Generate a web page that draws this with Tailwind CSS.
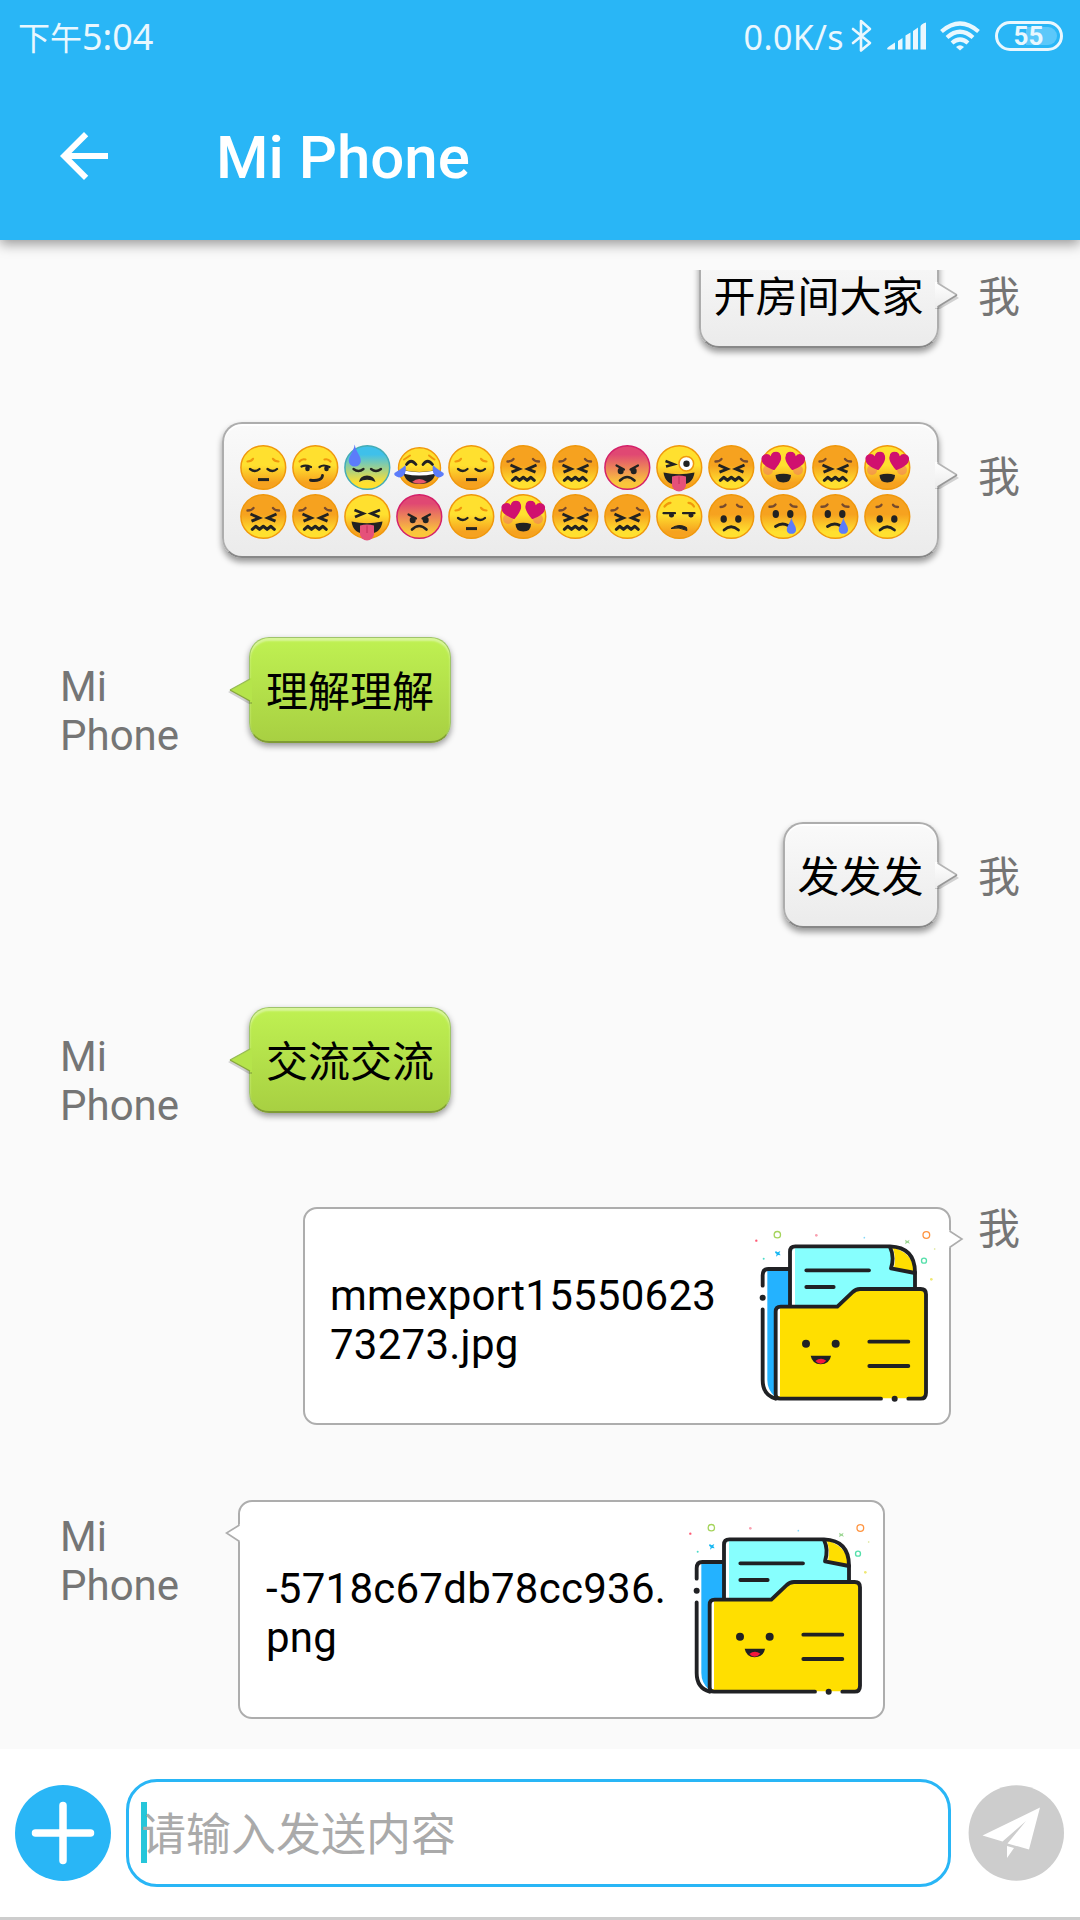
<!DOCTYPE html>
<html lang="zh-CN">
<head>
<meta charset="utf-8">
<title>Mi Phone</title>
<script src="https://cdn.jsdelivr.net/npm/@tailwindcss/browser@4"></script>
</head>
<body class="w-[1080px] h-[1920px] overflow-hidden flex flex-col bg-[#fafafa] font-['Roboto','Noto_Sans_CJK_SC',sans-serif] text-[42px] leading-[49px] text-black">

<svg width="0" height="0" class="absolute" aria-hidden="true">
  <defs>
    <linearGradient id="gy" x1="0" y1="0" x2="0" y2="1"><stop offset=".45" stop-color="#ffe02f"/><stop offset=".85" stop-color="#f6a21f"/></linearGradient>
    <linearGradient id="go" x1="0" y1="0" x2="0" y2="1"><stop offset=".45" stop-color="#f6a21f"/><stop offset=".85" stop-color="#ffe02f"/></linearGradient>
    <linearGradient id="gb" x1="0" y1="0" x2="0" y2="1"><stop offset=".2" stop-color="#3fc0ea"/><stop offset=".85" stop-color="#ffe02f"/></linearGradient>
    <linearGradient id="gr" x1="0" y1="0" x2="0" y2="1"><stop offset=".2" stop-color="#e04873"/><stop offset=".85" stop-color="#fac63b"/></linearGradient>
    <symbol id="yellow" viewBox="0 0 52 49"><ellipse cx="26.300" cy="24.500" rx="22.400" ry="21.800" fill="url(#gy)" stroke="#f0980c" stroke-width="1.500"/></symbol>
    <symbol id="orange" viewBox="0 0 52 49"><ellipse cx="26.300" cy="24.500" rx="22.400" ry="21.800" fill="url(#go)" stroke="#f0980c" stroke-width="1.500"/></symbol>
    <symbol id="heart" viewBox="0 0 20 18"><path d="M10 18C3 13 0 9.500 0 5.500A5.200 5.200 0 0 1 10 3.500A5.200 5.200 0 0 1 20 5.500C20 9.500 17 13 10 18Z" fill="#d0106f"/></symbol>

    <symbol id="pensive" viewBox="0 0 52 49"><use href="#yellow" width="52" height="49"/>
      <g fill="none" stroke-linecap="round"><path d="M10.500 18.500Q14.500 18.500 16 15.800M36 15.800Q37.500 18.500 41.500 18.500" stroke="#f0980c" stroke-width="2.200"/><path d="M13 26q5 4 9.500 0M30.500 26q5 4 9.500 0" stroke="#222" stroke-width="2.300"/><path d="M21 36.600h11" stroke="#222" stroke-width="3" stroke-linecap="butt"/></g></symbol>
    <symbol id="smirk" viewBox="0 0 52 49"><use href="#yellow" width="52" height="49"/>
      <g fill="none" stroke-linecap="round"><path d="M10.500 18.500Q13 15.500 16.500 16.500M35.500 16.500Q39 15.500 41.500 18.500" stroke="#f0980c" stroke-width="2.200"/><path d="M12.500 23.500q4-2 9.500.5M30.500 24q4-3 10 0" stroke="#222" stroke-width="2.200"/><path d="M18.500 25v1M37.500 25v1" stroke="#222" stroke-width="4.500"/><path d="M21.500 37.200Q33 38.500 33.500 32.500" stroke="#222" stroke-width="2.900"/></g></symbol>
    <symbol id="sweat" viewBox="0 0 52 49"><ellipse cx="26.300" cy="24.500" rx="22.400" ry="21.800" fill="url(#gb)" stroke="#45acb5" stroke-width="1.500"/>
      <path d="M12.500 26q5 4 10 0M30 26q5 4 10 0" fill="none" stroke="#222" stroke-width="2.300" stroke-linecap="round"/><path d="M18 39Q19 32.500 26 32.500T34.500 39Q26 34.500 18 39Z" fill="#222"/><path d="M13.700 1.500C15 9 20 13 19.800 18A6 5.500 0 0 1 7.800 18C7.800 13 12.500 9 13.700 1.500Z" fill="#5c7cfa"/></symbol>
    <symbol id="joy" viewBox="0 0 52 49"><ellipse cx="26.500" cy="25" rx="21" ry="20.300" fill="url(#gy)" stroke="#f0980c" stroke-width="1.400"/>
      <g fill="none" stroke-linecap="round"><path d="M11 16.500Q13.500 15 17 12.500M36 12.500Q39 15 41.500 16.500" stroke="#f0980c" stroke-width="2"/><path d="M13.500 21.500q4.500-6.500 9.500 0M30 21.500q4.500-6.500 9.500 0" stroke="#222" stroke-width="2.800"/></g><path d="M10 27Q26 31 43 27Q42 41 26.500 41T10 27Z" fill="#222"/><path d="M11 27.400Q26 31 42 27.400L41 31Q26 34 12 31Z" fill="#fff"/><path d="M19 39Q26 33 34 39Q26 42.500 19 39Z" fill="#e9566a"/><path d="M12.500 22C14 29 11 34.500 6 34.500Q0 32.500 1.500 30C5 27.500 9 26 12.500 22ZM40 22C38.500 29 41.500 34.500 46.500 34.500Q52 32.500 50.500 30C47 27.500 43.500 26 40 22Z" fill="#5c7cfa"/></symbol>
    <symbol id="confounded" viewBox="0 0 52 49"><use href="#orange" width="52" height="49"/>
      <g fill="none" stroke-linecap="round"><path d="M10.500 18.500Q15 18.500 16.500 16M36 16Q37.500 18.500 42 18.500" stroke="#774a2c" stroke-width="2.400"/><path d="M13.500 22L22.300 26L14.500 29.200M39.500 22L30.700 26L38.500 29.200" stroke="#222" stroke-width="2.900" stroke-linecap="butt" stroke-linejoin="miter"/><path d="M15.300 37.300L18.700 34.300L22.500 37.300L26.300 34.300L30.100 37.300L33.900 34.300L37.300 37.300" stroke="#222" stroke-width="3.100" stroke-linejoin="round"/></g></symbol>
    <symbol id="tongue" viewBox="0 0 52 49"><path d="M10.500 29.500Q26 33 41.500 29.500Q40 42 26 42T10.500 29.500Z" fill="#222"/><path d="M19 33.500Q26 31.500 33 33.500V42A7 6.500 0 0 1 19 42Z" fill="#e5517a"/><path d="M26 33.500V41" stroke="#c22f5d" stroke-width="1"/></symbol>
    <symbol id="squint" viewBox="0 0 52 49"><use href="#yellow" width="52" height="49"/><path d="M13.500 18L22.300 21.500L14 25M39 18L30.200 21.500L38.500 25" fill="none" stroke="#222" stroke-width="2.800"/><use href="#tongue" width="52" height="49"/></symbol>
    <symbol id="wink" viewBox="0 0 52 49"><use href="#yellow" width="52" height="49"/><path d="M12.500 18L21 21.300L13 23.500" fill="none" stroke="#222" stroke-width="2.500"/><circle cx="33.300" cy="20.700" r="7.300" fill="#fff" stroke="#f0980c" stroke-width="1.500"/><circle cx="33.500" cy="20.700" r="3.200" fill="#222"/><use href="#tongue" width="52" height="49"/></symbol>
    <symbol id="angry" viewBox="0 0 52 49"><ellipse cx="26.300" cy="24.500" rx="22.400" ry="21.800" fill="url(#gr)" stroke="#d4206a" stroke-width="1.500"/><path d="M15.500 22.500L23 26.500M37 22.500L29.500 26.500" stroke="#222" stroke-width="2.200" stroke-linecap="round"/><ellipse cx="19.700" cy="28" rx="3" ry="3.200" fill="#222"/><ellipse cx="32.700" cy="28" rx="3" ry="3.200" fill="#222"/><path d="M19 37.500Q26 30.500 33.500 37.500" fill="none" stroke="#222" stroke-width="2.600" stroke-linecap="round"/></symbol>
    <symbol id="love" viewBox="0 0 52 49"><use href="#yellow" width="52" height="49"/><circle cx="11" cy="27" r="5" fill="#ee7565" opacity=".5"/><circle cx="41" cy="27" r="5" fill="#ee7565" opacity=".5"/><use href="#heart" x="5" y="9.500" width="20" height="18" transform="rotate(-14 15 18)"/><use href="#heart" x="27.500" y="9.500" width="20" height="18" transform="rotate(14 37.500 18)"/><path d="M18.500 32Q26.300 29.500 34 32Q34 39.500 26.300 39.500T18.500 32Z" fill="#222"/></symbol>
    <symbol id="unamused" viewBox="0 0 52 49"><use href="#yellow" width="52" height="49"/><g fill="none" stroke-linecap="round"><path d="M11.500 14.500Q14 11 17.500 10.800M35.500 10.800Q39 11 41 14.500" stroke="#f0980c" stroke-width="2.200"/><path d="M10.500 21.200h11.500M30 21.200h11.500" stroke="#222" stroke-width="2.200"/><path d="M18 23.300h1M37.500 23.300h1" stroke="#222" stroke-width="4.200"/></g><path d="M18 36.500Q26 31 33.500 35.500L34 38.500Q26 34.500 18 36.500Z" fill="#222" stroke="#222"/></symbol>
    <symbol id="worried" viewBox="0 0 52 49"><use href="#orange" width="52" height="49"/><g fill="none" stroke-linecap="round"><path d="M15.500 15Q19 15 20.500 12.800M32 12.800Q33.500 15 37 15" stroke="#774a2c" stroke-width="2.300"/><path d="M19 38Q26 31.500 33.500 38" stroke="#222" stroke-width="2.700"/></g><ellipse cx="18.700" cy="27" rx="3.200" ry="3.800" fill="#222"/><ellipse cx="33.300" cy="27" rx="3.200" ry="3.800" fill="#222"/></symbol>
    <symbol id="cry" viewBox="0 0 52 49"><use href="#orange" width="52" height="49"/><g fill="none" stroke-linecap="round"><path d="M12.500 14.800Q17 15 18.500 12.500M33.500 12.500Q35 15 39.500 14.800" stroke="#774a2c" stroke-width="2.400"/><path d="M18.500 34.500Q25 30 31 33.500" stroke="#222" stroke-width="2.900"/></g><ellipse cx="18.800" cy="22" rx="3.200" ry="3.900" fill="#222"/><ellipse cx="33.300" cy="22" rx="3.200" ry="3.900" fill="#222"/><path d="M34.300 25.500C35.500 31 39.500 34 39 38.500A4.700 4.200 0 0 1 29.800 38.500C29.500 34 33.500 31 34.300 25.500Z" fill="#5c7cfa"/></symbol>

    <linearGradient id="tipg" x1="0" y1="0" x2="0" y2="1"><stop offset="0" stop-color="#fff"/><stop offset="1" stop-color="#ececec"/></linearGradient>
    <symbol id="tip-gray" viewBox="0 0 30 40"><path d="M0 8L5 8L24 21L5 32L0 32Z" fill="#000" opacity=".16"/><path d="M0 5H2.500V6L22 18L2.500 30V31H0Z" fill="url(#tipg)"/><path d="M2.500 6L22 18" fill="none" stroke="#b4b4b4" stroke-width="1.500"/><path d="M22 18L2.500 30" fill="none" stroke="#979797" stroke-width="1.500"/></symbol>
    <symbol id="tip-green" viewBox="0 0 30 40"><path d="M30 10L26 10L6 20L27 32L30 32Z" fill="#000" opacity=".16"/><path d="M30 6H28V7L8 18L28 29V30H30Z" fill="#b5e44b"/><path d="M28 7L8 18" fill="none" stroke="#97bb55" stroke-width="1.400"/><path d="M8 18L28 29" fill="none" stroke="#87a63d" stroke-width="1.400"/></symbol>

    <symbol id="folder" viewBox="72 114 558 528">
      <path d="M112 240H185V350L135 365V620Q112 600 112 570Z" fill="#24b2ff"/>
      <path d="M195 170H480L552 245V300H380L325 348H185V185Z" fill="#87fffe"/>
      <path d="M185 185V348H195V172Z" fill="#fff"/>
      <path d="M480 170Q495 200 483 235L555 250Q550 185 480 170Z" fill="#ffdf00"/>
      <path d="M480 175Q490 200 483 233L492 235Q498 205 490 178Z" fill="#fff"/>
      <path d="M137 350H325L382 297H588V625H137Z" fill="#ffdf00"/>
      <path d="M140 355H150V618H140Z" fill="#fff"/>
      <g fill="none" stroke="#202124" stroke-width="11.500" stroke-linecap="round" stroke-linejoin="round">
        <path d="M98 287V256Q98 237 115 237H177"/>
        <path d="M98 358V570Q98 615 137 626"/>
        <path d="M180 345V185Q180 169 196 169H480Q556 172 555 250V294"/>
        <path d="M480 171Q494 200 483 235L555 249"/>
        <path d="M453 626H150Q137 626 137 612V365Q137 350 152 350H322L367 307Q377 297 390 297H572Q588 297 588 313V608Q588 626 572 626H535"/>
        <path d="M229 241H417M229 291H311M418 455H535M418 528H535"/>
      </g>
      <g fill="#202124"><circle cx="98" cy="323" r="9"/><circle cx="494" cy="626" r="9"/><circle cx="228" cy="461" r="12"/><circle cx="317" cy="461" r="12"/><path d="M242 497H303Q299 522 272 523Q247 522 242 497Z"/></g>
      <path d="M256 513Q272 500 289 512Q272 530 256 513Z" fill="#f5193c"/>
      <g fill="none" stroke-width="4"><circle cx="142" cy="134" r="9.500" stroke="#a5d45c"/><circle cx="589" cy="135" r="10" stroke="#ff9440"/><circle cx="582" cy="212" r="7.500" stroke="#55dfaa"/></g>
      <path d="M137 183L143 187L151 183L148 190L152 196L144 195L138 200L140 192L135 188Z" fill="#18b7f2"/>
      <path d="M525 149L532 153L539 149L536 155L540 161L532 158L525 163L527 156Z" fill="#9bd692"/>
      <circle cx="79" cy="152" r="3.500" fill="#ff5a74"/><circle cx="259" cy="136" r="4" fill="#f9a0b0"/><circle cx="101" cy="206" r="3" fill="#4cdcc8"/><circle cx="403" cy="143" r="2.500" fill="#85d8fa"/><circle cx="614" cy="177" r="2.500" fill="#d8e38b"/><circle cx="604" cy="268" r="4" fill="#efe873"/>
    </symbol>
  </defs>
</svg>

<header class="relative z-10 h-[240px] shrink-0 bg-[#29b6f6] shadow-[0_4px_12px_rgba(0,0,0,0.4)]">
  <div class="flex h-[72px] items-center pl-[18px] pr-[17px] text-[#e9f7fe]">
    <span class="pt-[2px] font-['Noto_Sans','Noto_Sans_CJK_SC',sans-serif] text-[36px] leading-[50px] whitespace-nowrap"><span class="text-[32px]">下午</span>5:04</span>
    <span class="ml-auto pt-[2px] font-['Noto_Sans',sans-serif] text-[34px] leading-[50px] tracking-[0.4px]">0.0K/s</span>
    <svg class="ml-[7px] shrink-0" width="22" height="34" viewBox="0 0 22 34" fill="none" stroke="#e9f7fe" stroke-width="2.600" stroke-linejoin="round" stroke-linecap="round"><path d="M2 10L19 24L10 31.500V2L19 10L2 24"/></svg>
    <svg class="ml-[14px] shrink-0" width="39" height="28" viewBox="0 0 39 28" fill="#e9f7fe"><path d="M0 27Q0 25.500 2 24.500L8 20.500V27.500H1ZM11 19L15.500 16V27.500H11ZM18.500 13.500L23.500 10.500V27.500H18.500ZM26 9L31 5.500V27.500H26ZM33.500 4.500Q34 2 39 .5V27.500H33.500Z"/></svg>
    <svg class="ml-[14px] shrink-0" width="40" height="30" viewBox="0 0 40 30"><g fill="none" stroke="#e9f7fe" stroke-width="4.200"><path d="M1.500 10.500Q20-5.500 38.500 10.500"/><path d="M7 16.500Q20 5 33 16.500"/><path d="M12 22Q20 15 28 22"/></g><path d="M16 26Q20 22.500 24 26L20 29.500Z" fill="#e9f7fe"/></svg>
    <div class="ml-[15px] flex h-[30px] w-[68px] shrink-0 items-center rounded-full border-3 border-[#e9f7fe] p-[3px]">
      <div class="flex h-full w-full items-center justify-center rounded-full bg-linear-to-r from-transparent from-45% to-[#5cc8fa] to-45% pr-[1px] text-[26px] leading-none font-bold">55</div>
    </div>
  </div>
  <div class="flex h-[168px] items-center pl-[48px]">
    <svg width="72" height="72" viewBox="0 0 24 24" fill="#fff"><path d="M20 11H7.830l5.590-5.590L12 4l-8 8 8 8 1.410-1.410L7.830 13H20v-2z"/></svg>
    <h1 class="ml-[96px] pt-[4px] text-[60px] leading-[70px] font-medium text-white">Mi Phone</h1>
  </div>
</header>

<main class="mt-[30px] h-[1479px] shrink-0 overflow-hidden px-[60px]">
  <div class="-mt-[28px] flex h-[106px] justify-end">
    <div class="relative mr-[39px] h-[106px] w-[240px] rounded-[20px] border-2 border-[#adadad] border-b-[#888] bg-linear-to-b from-[#fafafa] to-[#ebebeb] pt-[29px] pr-[1px] text-center shadow-[0_4px_6px_rgba(0,0,0,0.4),inset_0_2px_1px_#fff]">开房间大家
      <svg class="absolute top-[33px] left-[234px]" width="30" height="40"><use href="#tip-gray"/></svg></div>
    <div class="mt-[31px] text-[#757575]">我</div>
  </div>

  <div class="mt-[74px] flex h-[136px] justify-end">
    <div class="relative mr-[39px] h-[136px] w-[717px] rounded-[20px] border-2 border-[#adadad] border-b-[#888] bg-linear-to-b from-[#fafafa] to-[#ebebeb] pt-[19px] pl-[13px] shadow-[0_4px_6px_rgba(0,0,0,0.4),inset_0_2px_1px_#fff]">
      <div class="grid w-[676px] grid-cols-13">
        <svg width="52" height="49"><use href="#pensive"/></svg><svg width="52" height="49"><use href="#smirk"/></svg><svg width="52" height="49"><use href="#sweat"/></svg><svg width="52" height="49"><use href="#joy"/></svg><svg width="52" height="49"><use href="#pensive"/></svg><svg width="52" height="49"><use href="#confounded"/></svg><svg width="52" height="49"><use href="#confounded"/></svg><svg width="52" height="49"><use href="#angry"/></svg><svg width="52" height="49"><use href="#wink"/></svg><svg width="52" height="49"><use href="#confounded"/></svg><svg width="52" height="49"><use href="#love"/></svg><svg width="52" height="49"><use href="#confounded"/></svg><svg width="52" height="49"><use href="#love"/></svg>
        <svg width="52" height="49"><use href="#confounded"/></svg><svg width="52" height="49"><use href="#confounded"/></svg><svg width="52" height="49"><use href="#squint"/></svg><svg width="52" height="49"><use href="#angry"/></svg><svg width="52" height="49"><use href="#pensive"/></svg><svg width="52" height="49"><use href="#love"/></svg><svg width="52" height="49"><use href="#confounded"/></svg><svg width="52" height="49"><use href="#confounded"/></svg><svg width="52" height="49"><use href="#unamused"/></svg><svg width="52" height="49"><use href="#worried"/></svg><svg width="52" height="49"><use href="#cry"/></svg><svg width="52" height="49"><use href="#cry"/></svg><svg width="52" height="49"><use href="#worried"/></svg>
      </div>
      <svg class="absolute top-[33px] left-[711px]" width="30" height="40"><use href="#tip-gray"/></svg></div>
    <div class="mt-[31px] text-[#757575]">我</div>
  </div>

  <div class="mt-[79px] flex h-[106px]">
    <div class="mt-[25px] w-[189px] text-[#757575]">Mi<br>Phone</div>
    <div class="relative h-[106px] w-[202px] rounded-[20px] border-[1.5px] border-[#9fc46a] border-b-2 border-b-[#7f9b34] bg-linear-to-b from-[#bff152] to-[#a8d042] pt-[30px] text-center shadow-[0_3px_6px_rgba(0,0,0,0.4),inset_0_3px_2px_#d8f59a]">理解理解
      <svg class="absolute top-[34px] -left-[28px]" width="30" height="40"><use href="#tip-green"/></svg></div>
  </div>

  <div class="mt-[79px] flex h-[106px] justify-end">
    <div class="relative mr-[39px] h-[106px] w-[156px] rounded-[20px] border-2 border-[#adadad] border-b-[#888] bg-linear-to-b from-[#fafafa] to-[#ebebeb] pt-[29px] pr-[1px] text-center shadow-[0_4px_6px_rgba(0,0,0,0.4),inset_0_2px_1px_#fff]">发发发
      <svg class="absolute top-[33px] left-[150px]" width="30" height="40"><use href="#tip-gray"/></svg></div>
    <div class="mt-[31px] text-[#757575]">我</div>
  </div>

  <div class="mt-[79px] flex h-[106px]">
    <div class="mt-[25px] w-[189px] text-[#757575]">Mi<br>Phone</div>
    <div class="relative h-[106px] w-[202px] rounded-[20px] border-[1.5px] border-[#9fc46a] border-b-2 border-b-[#7f9b34] bg-linear-to-b from-[#bff152] to-[#a8d042] pt-[30px] text-center shadow-[0_3px_6px_rgba(0,0,0,0.4),inset_0_3px_2px_#d8f59a]">交流交流
      <svg class="absolute top-[34px] -left-[28px]" width="30" height="40"><use href="#tip-green"/></svg></div>
  </div>

  <div class="mt-[94px] flex h-[218px] justify-end">
    <div class="relative mr-[27px] flex h-[218px] w-[648px] rounded-[14px] border-2 border-[#adadad] bg-white">
      <p class="mt-[62px] ml-[25px] w-[424px] tracking-[0.25px] whitespace-nowrap">mmexport15550623<br>73273.jpg</p>
      <svg class="mt-[19px] shrink-0" width="186" height="176"><use href="#folder"/></svg>
      <svg class="absolute top-[18px] left-[643px]" width="18" height="24" viewBox="0 0 18 24"><path d="M0 3.500H2L14 12L2 20.500H0Z" fill="#fff"/><path d="M1.500 4L14 12L1.500 20.500" fill="none" stroke="#adadad" stroke-width="1.600"/></svg>
    </div>
    <div class="-mt-[2px] text-[#757575]">我</div>
  </div>

  <div class="mt-[75px] flex h-[219px]">
    <div class="mt-[12px] w-[178px] text-[#757575]">Mi<br>Phone</div>
    <div class="relative flex h-[219px] w-[647px] rounded-[14px] border-2 border-[#adadad] bg-white">
      <p class="mt-[62px] ml-[26px] w-[422px] tracking-[0.25px] whitespace-nowrap">-5718c67db78cc936.<br>png</p>
      <svg class="mt-[19px] shrink-0" width="186" height="176"><use href="#folder"/></svg>
      <svg class="absolute top-[19px] -left-[16px]" width="18" height="24" viewBox="0 0 18 24"><path d="M18 3.500H15.500L3 12L15.500 20.500H18Z" fill="#fff"/><path d="M15.500 4L2.500 12L15.500 20.500" fill="none" stroke="#adadad" stroke-width="1.600"/></svg>
    </div>
  </div>
</main>

<footer class="flex h-[171px] shrink-0 items-start border-b-3 border-[#cdcdcd] bg-white pt-[30px] pl-[15px]">
  <svg class="mt-[6px] shrink-0" width="96" height="96" viewBox="0 0 96 96"><circle cx="48" cy="48" r="48" fill="#29b6f6"/><path d="M20.500 48H75.500M48 20.500V75.500" stroke="#fff" stroke-width="7.500" stroke-linecap="round"/></svg>
  <div class="ml-[15px] flex h-[108px] w-[825px] shrink-0 items-start rounded-[31px] border-3 border-[#29b6f6] pl-[12px] text-[45px] leading-[53px] text-[#aaa]">
    <div class="mt-[20px] h-[61px] w-[6px] shrink-0 bg-[#26c6da]"></div>
    <div class="mt-[27px] -ml-[6px] whitespace-nowrap">请输入发送内容</div>
  </div>
  <svg class="mt-[6px] ml-[17px] shrink-0" width="96" height="96" viewBox="0 0 96 96"><circle cx="48.300" cy="48" r="47.700" fill="#cdcdcd"/><path d="M72 22.500L14.500 50.500L34.500 56.500L58 36L39.500 58.500L61 64.500ZM39 61L46 63L39 73Z" fill="#fff"/></svg>
</footer>
</body>
</html>
